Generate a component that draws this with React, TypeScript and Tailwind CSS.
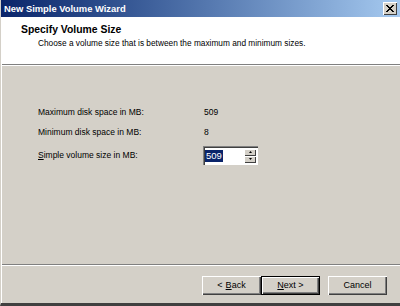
import React from "react";

const font = { fontFamily: '"Liberation Sans", Arial, sans-serif' };

function Btn({ children, def }: { children: React.ReactNode; def?: boolean }) {
  return (
    <div
      className={
        "w-[59px] h-[19px] flex items-center justify-center text-[9px] text-black bg-[#d4d0c8] " +
        (def
          ? "border border-black shadow-[inset_1px_1px_0_#fff,inset_-1px_-1px_0_#404040,inset_-2px_-2px_0_#808080]"
          : "shadow-[inset_1px_1px_0_#fff,inset_-1px_-1px_0_#404040,inset_-2px_-2px_0_#808080]")
      }
    >
      {children}
    </div>
  );
}

export default function App() {
  return (
    <div
      style={font}
      className="w-[400px] h-[306px] bg-[#d4d0c8] flex flex-col border-l border-[#d4d0c8] border-b-[3px] border-b-[#404040] overflow-hidden"
    >
      <div className="h-[17px] shrink-0 bg-gradient-to-r from-[#0a246a] to-[#a6caf0] flex items-center justify-between pl-[3px] pr-[3px]">
        <span className="text-white font-bold text-[9.4px] leading-none">New Simple Volume Wizard</span>
        <div className="w-[14px] h-[13px] bg-[#d4d0c8] shadow-[inset_1px_1px_0_#fff,inset_-1px_-1px_0_#404040] flex items-center justify-center">
          <svg width="8" height="7" viewBox="0 0 8 7">
            <path d="M0 0 L7 7 M1 0 L8 7 M7 0 L0 7 M8 0 L1 7" stroke="#000" strokeWidth="1" />
          </svg>
        </div>
      </div>
      <div className="flex-1 flex flex-col border-l border-white">
        <div className="h-[47px] shrink-0 bg-white pl-[19px] pt-[6px]">
          <div className="text-[10.4px] font-bold text-black leading-[13px]">Specify Volume Size</div>
          <div className="text-[8.3px] text-black leading-[13px] pl-[17px] mt-[1px]">
            Choose a volume size that is between the maximum and minimum sizes.
          </div>
        </div>
        <div className="h-px bg-[#808080] shrink-0" />
        <div className="h-px bg-white shrink-0" />
        <div className="flex-1 flex flex-col pl-[36px] pt-[40px] text-[8.5px] text-black">
          <div className="flex items-center h-[12px]">
            <span className="w-[166px]">Maximum disk space in MB:</span>
            <span>509</span>
          </div>
          <div className="flex items-center h-[12px] mt-[8px]">
            <span className="w-[166px]">Minimum disk space in MB:</span>
            <span>8</span>
          </div>
          <div className="flex items-center mt-[8px]">
            <span className="w-[165px]">
              <span className="underline">S</span>imple volume size in MB:
            </span>
            <div className="w-[55px] h-[19px] bg-white shadow-[inset_1px_1px_0_#808080,inset_2px_2px_0_#404040,inset_-1px_-1px_0_#fff] flex items-center pl-[2px] pr-[2px]">
              <span className="bg-[#0a246a] text-white px-px leading-[12px] text-[9.5px]">509</span>
              <div className="ml-auto flex flex-col">
                <div className="w-[12px] h-[7px] bg-[#d4d0c8] shadow-[inset_1px_1px_0_#fff,inset_-1px_-1px_0_#404040] flex items-center justify-center">
                  <svg width="3" height="2" viewBox="0 0 3 2"><path d="M1.5 0 L3 2 L0 2 Z" fill="#000" /></svg>
                </div>
                <div className="w-[12px] h-[7px] bg-[#d4d0c8] shadow-[inset_1px_1px_0_#fff,inset_-1px_-1px_0_#404040] flex items-center justify-center">
                  <svg width="3" height="2" viewBox="0 0 3 2"><path d="M0 0 L3 0 L1.5 2 Z" fill="#000" /></svg>
                </div>
              </div>
            </div>
          </div>
        </div>
        <div className="h-px bg-[#808080] shrink-0" />
        <div className="h-px bg-white shrink-0" />
        <div className="h-[37px] shrink-0 flex items-start pt-[10px] pl-[200px]">
          <Btn>
            &lt; <span className="underline ml-[3px]">B</span>ack
          </Btn>
          <Btn def>
            <span className="underline">N</span>ext &gt;
          </Btn>
          <div className="w-[8px]" />
          <Btn>Cancel</Btn>
        </div>
      </div>
    </div>
  );
}
